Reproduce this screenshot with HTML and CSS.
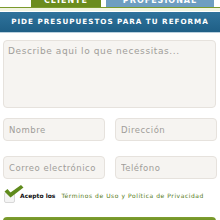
FILE: index.html
```html
<!DOCTYPE html>
<html>
<head>
<meta charset="utf-8">
<link rel="stylesheet" href="styles.css">
</head>
<body>
<div class="tabs">
  <div class="tab tab-green"><span>CLIENTE</span></div>
  <div class="tab tab-blue"><span>PROFESIONAL</span></div>
</div>
<div class="tabline"></div>
<div class="header">PIDE PRESUPUESTOS PARA TU REFORMA</div>
<form class="form">
  <textarea class="field area" placeholder="Describe aqui lo que necessitas..."></textarea>
  <div class="row">
    <input class="field" placeholder="Nombre">
    <input class="field" placeholder="Dirección">
  </div>
  <div class="row">
    <input class="field" placeholder="Correo electrónico">
    <input class="field" placeholder="Teléfono">
  </div>
  <label class="accept">
    <span class="check">
      <span class="box"></span>
      <svg class="tick" width="20" height="13" viewBox="0 0 20 13"><path d="M0.5 6.5 L3.5 4 L6.5 7.5 L17 0 L19.5 2.5 L6.5 12.5 Z" fill="#5f8a1c"/></svg>
    </span>
    <span class="acc-text"><b>Acepto los</b><span class="terms">Términos de Uso y Política de Privacidad</span></span>
  </label>
  <div class="submit"></div>
</form>
</body>
</html>
```
FILE: styles.css
```css
html, body { margin: 0; padding: 0; background: #fff; }
body { width: 220px; height: 220px; overflow: hidden; font-family: "DejaVu Sans", Verdana, sans-serif; }
.tabs { display: flex; height: 7px; }
.tab { height: 7px; overflow: hidden; color: #fff; font-size: 8px; font-weight: bold; letter-spacing: 1px; text-align: center; line-height: 2px; }
.tab-green { margin-left: 31px; width: 70px; background: #6b8c1e; }
.tab-blue { margin-left: 5px; width: 108px; background: #6e9ec1; }
.tabline { height: 1px; background: #7b9a2c; border-bottom: 3px solid #f1f4e2; margin-bottom: 1px; }
.header { height: 20px; background: linear-gradient(#2f739c, #1f5f86); border-bottom: 1px solid #b9d0de; color: #fff; font-size: 7.2px; font-weight: bold; letter-spacing: 1px; line-height: 20px; text-align: center; white-space: nowrap; }
.form { display: flex; flex-direction: column; padding: 7px 4px 0 3px; }
.field { box-sizing: border-box; margin: 0; border: 1px solid #e6e2dd; border-radius: 4px; background: #f6f4f1; font-family: "DejaVu Sans", Verdana, sans-serif; font-size: 8.5px; letter-spacing: 0.5px; color: #555; padding: 0 5px; outline: none; }
.field::placeholder { color: #a09d99; }
.area { width: 213px; height: 68px; resize: none; padding: 5px 4px; font-size: 9px; letter-spacing: 0.6px; }
.row { display: flex; gap: 10px; margin-top: 10px; }
.row + .row { margin-top: 15px; }
.row .field { width: 102px; height: 23px; }
.accept { display: flex; align-items: flex-start; margin-top: 4px; height: 22px; }
.check { position: relative; width: 17px; height: 22px; flex: none; }
.box { position: absolute; left: 1px; top: 9px; width: 9px; height: 9px; border: 1px solid #d8d8d8; border-radius: 2px; background: #f4f4f4; }
.tick { position: absolute; left: 1px; top: 2px; }
.acc-text { font-size: 6px; color: #111; white-space: nowrap; margin-top: 9px; }
.terms { color: #557a16; letter-spacing: 0.55px; margin-left: 6px; }
.submit { margin-top: 12px; height: 6px; border-radius: 4px 4px 0 0; background: linear-gradient(#7f9e30, #668a1c); }
```
